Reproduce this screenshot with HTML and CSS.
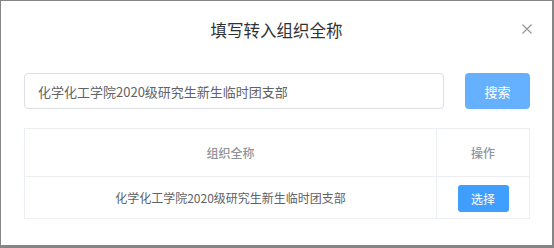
FILE: index.html
```html
<!DOCTYPE html>
<html lang="zh">
<head>
<meta charset="utf-8">
<link rel="stylesheet" href="styles.css">
</head>
<body>
<div class="dialog">
  <div class="header">
    <span></span>
    <div class="title">填写转入组织全称</div>
    <button class="close" aria-label="关闭">
      <svg width="10" height="10" viewBox="0 0 10 10"><path d="M0.5 0.5L9.5 9.5M9.5 0.5L0.5 9.5" stroke="#909399" stroke-width="1.1" fill="none"/></svg>
    </button>
  </div>
  <div class="body">
    <div class="search-row">
      <div class="input">化学化工学院2020级研究生新生临时团支部</div>
      <button class="btn-search">搜索</button>
    </div>
    <table class="table">
      <thead>
        <tr><th class="col-name">组织全称</th><th class="col-op">操作</th></tr>
      </thead>
      <tbody>
        <tr><td class="col-name">化学化工学院2020级研究生新生临时团支部</td><td class="col-op"><button class="btn-select">选择</button></td></tr>
      </tbody>
    </table>
  </div>
</div>
</body>
</html>
```
FILE: styles.css
```css
html, body { margin: 0; padding: 0; background: #fff; }
body { font-family: "Microsoft YaHei", "Noto Sans CJK SC", "Noto Sans", sans-serif; }
.dialog {
  width: 554px; height: 248px; box-sizing: border-box;
  border-style: solid; border-color: #858585;
  border-width: 1px 2px 3px 1px;
  background: #fff;
}
.header {
  height: 58px;
  display: grid; grid-template-columns: 1fr auto 1fr; align-items: center;
}
.title { font-size: 16.5px; color: #303133; line-height: 1; }
.close {
  justify-self: end; margin-right: 20px; margin-top: -2px;
  border: 0; background: none; padding: 0; width: 10px; height: 10px;
  display: flex;
}
.body { padding: 14px 22px 0 23px; }
.search-row { display: flex; align-items: flex-start; gap: 21px; }
.input {
  width: 420px; height: 36px; box-sizing: border-box;
  border: 1px solid #dcdfe6; border-radius: 4px;
  padding: 0 13px; font-size: 13px; color: #606266;
  display: flex; align-items: center;
}
.btn-search {
  width: 65px; height: 36px; border: 0; border-radius: 4px;
  background: #66b1ff; color: #fff; font-family: inherit; font-size: 13px; padding: 0;
}
.table {
  margin-top: 19px; width: 506px; border-collapse: collapse;
  border: 1px solid #ebeef5; font-size: 12px;
}
.table th, .table td { border: 1px solid #ebeef5; text-align: center; padding: 0; }
.table th { height: 47px; color: #909399; font-weight: 500; }
.table td { height: 41px; color: #606266; }
.col-name { width: 411px; }
.btn-select {
  width: 51px; height: 27px; border: 0; border-radius: 3px;
  background: #409eff; color: #fff; font-family: inherit; font-size: 12px; padding: 0;
  vertical-align: middle; margin-top: 1px;
}
```
